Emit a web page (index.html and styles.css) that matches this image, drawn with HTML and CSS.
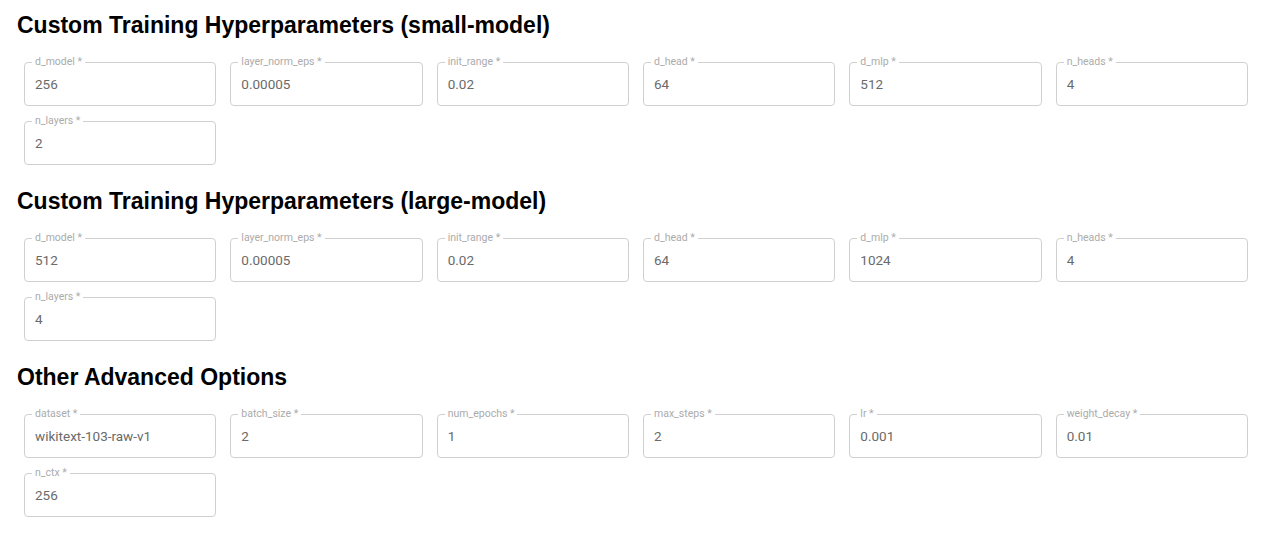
FILE: index.html
```html
<!DOCTYPE html>
<html>
<head>
<meta charset="utf-8">
<link rel="stylesheet" href="styles.css">
</head>
<body>
<main class="page">
  <section class="section">
    <h2 class="title">Custom Training Hyperparameters (small-model)</h2>
    <div class="grid">
      <div class="field"><span class="label">d_model *</span><span class="value">256</span></div>
      <div class="field"><span class="label">layer_norm_eps *</span><span class="value">0.00005</span></div>
      <div class="field"><span class="label">init_range *</span><span class="value">0.02</span></div>
      <div class="field"><span class="label">d_head *</span><span class="value">64</span></div>
      <div class="field"><span class="label">d_mlp *</span><span class="value">512</span></div>
      <div class="field"><span class="label">n_heads *</span><span class="value">4</span></div>
      <div class="field"><span class="label">n_layers *</span><span class="value">2</span></div>
    </div>
  </section>
  <section class="section">
    <h2 class="title">Custom Training Hyperparameters (large-model)</h2>
    <div class="grid">
      <div class="field"><span class="label">d_model *</span><span class="value">512</span></div>
      <div class="field"><span class="label">layer_norm_eps *</span><span class="value">0.00005</span></div>
      <div class="field"><span class="label">init_range *</span><span class="value">0.02</span></div>
      <div class="field"><span class="label">d_head *</span><span class="value">64</span></div>
      <div class="field"><span class="label">d_mlp *</span><span class="value">1024</span></div>
      <div class="field"><span class="label">n_heads *</span><span class="value">4</span></div>
      <div class="field"><span class="label">n_layers *</span><span class="value">4</span></div>
    </div>
  </section>
  <section class="section">
    <h2 class="title">Other Advanced Options</h2>
    <div class="grid">
      <div class="field"><span class="label">dataset *</span><span class="value">wikitext-103-raw-v1</span></div>
      <div class="field"><span class="label">batch_size *</span><span class="value">2</span></div>
      <div class="field"><span class="label">num_epochs *</span><span class="value">1</span></div>
      <div class="field"><span class="label">max_steps *</span><span class="value">2</span></div>
      <div class="field"><span class="label">lr *</span><span class="value">0.001</span></div>
      <div class="field"><span class="label">weight_decay *</span><span class="value">0.01</span></div>
      <div class="field"><span class="label">n_ctx *</span><span class="value">256</span></div>
    </div>
  </section>
</main>
</body>
</html>
```
FILE: styles.css
```css
html, body {
  margin: 0;
  padding: 0;
  background: #ffffff;
}
.page {
  padding: 11px 32px 0 17px;
  display: flex;
  flex-direction: column;
  gap: 22px;
}
.section {
  display: flex;
  flex-direction: column;
}
.title {
  margin: 0 0 23px 0;
  font-family: "Liberation Sans", Arial, sans-serif;
  font-weight: bold;
  font-size: 23px;
  line-height: 28px;
  color: #000000;
}
.grid {
  margin-left: 7px;
  display: grid;
  grid-template-columns: repeat(6, 1fr);
  column-gap: 14px;
  row-gap: 15px;
}
.field {
  position: relative;
  height: 44px;
  box-sizing: border-box;
  border: 1px solid #d0d0d0;
  border-radius: 4px;
  display: flex;
  align-items: center;
  padding-left: 10px;
}
.label {
  position: absolute;
  left: 7px;
  top: -7px;
  padding: 0 3px;
  background: #ffffff;
  font-family: Roboto, "Liberation Sans", sans-serif;
  font-size: 10.5px;
  line-height: 12px;
  color: #ababab;
}
.value {
  font-family: Roboto, "Liberation Sans", sans-serif;
  font-size: 13.5px;
  color: #6a6a6a;
}
```
